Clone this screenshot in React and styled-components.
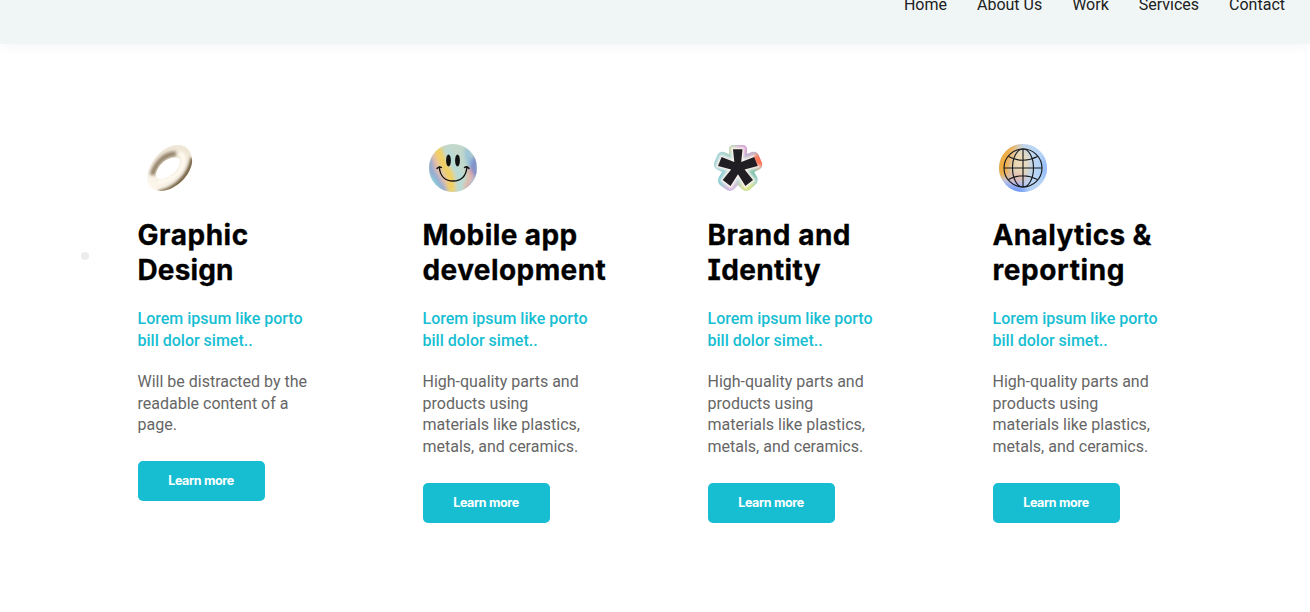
import React from 'react';
import styled, { createGlobalStyle } from 'styled-components';

const GlobalStyle = createGlobalStyle`
  * { box-sizing: border-box; }
  body { margin: 0; background: #fff; font-family: Roboto, sans-serif; overflow: hidden; }
`;

const Page = styled.div`
  height: 612px;
  overflow: hidden;
`;

const Header = styled.header`
  display: flex;
  align-items: flex-start;
  justify-content: flex-end;
  height: 44px;
  background: #f0f6f6;
  box-shadow: 0 4px 10px rgba(0, 0, 0, 0.03);
`;

const Nav = styled.nav`
  display: flex;
  gap: 30px;
  padding-right: 25px;
  margin-top: -7px;
`;

const NavLink = styled.a`
  font-size: 16px;
  line-height: 24px;
  color: #212121;
`;

const Services = styled.main`
  position: relative;
  display: grid;
  grid-template-columns: repeat(4, 285px);
  align-items: start;
  padding: 100px 0 0 137.5px;
`;

const Dot = styled.span`
  position: absolute;
  left: 81px;
  top: 208px;
  width: 8px;
  height: 8px;
  border-radius: 50%;
  background: #ececec;
`;

const Card = styled.article`
  width: 190px;
`;

const Icon = styled.svg`
  display: block;
  width: 48px;
  height: 48px;
  margin-left: 6.5px;
  overflow: visible;
`;

const Title = styled.h2`
  margin: 26px 0 0;
  font: 700 28px/35px Inter, sans-serif;
  font-feature-settings: 'cv08';
  -webkit-text-stroke: 0.3px #000;
  color: #000;
  white-space: nowrap;
`;

const TitleLine = styled.span`
  display: block;
  letter-spacing: ${(p) => p.$spacing || 0}px;
`;

const Lead = styled.p`
  margin: 20px 0 0;
  font-size: 16px;
  font-weight: 500;
  line-height: 22px;
  color: #17bed2;
  white-space: pre-line;
`;

const Copy = styled.p`
  margin: 19px 0 0;
  font-size: 16px;
  line-height: 21.6px;
  color: #666;
  white-space: pre-line;
`;

const Button = styled.button`
  display: block;
  width: 127px;
  height: 40px;
  margin-top: 25.4px;
  padding: 0;
  border: 0;
  border-radius: 5px;
  background: #17bed2;
  color: #fff;
  font: 700 12.5px/40px Inter, sans-serif;
  letter-spacing: -0.35px;
`;

const RingIcon = () => (
  <Icon viewBox="0 0 48 48">
    <defs>
      <linearGradient id="ring" x1="1" y1="0.1" x2="0.05" y2="0.9">
        <stop offset="0" stopColor="#efe6d6" />
        <stop offset="0.5" stopColor="#eee6d8" />
        <stop offset="1" stopColor="#fffaf0" />
      </linearGradient>
      <filter id="soft" filterUnits="userSpaceOnUse" x="-10" y="-10" width="68" height="68">
        <feGaussianBlur stdDeviation="1.7" />
      </filter>
      <clipPath id="ringClip">
        <path clipRule="evenodd" d="M34 1C43 1 49 8 48 19C45 35 29 47 16 47C6 47 1 39 4 28C9 12 22 1 34 1ZM31 13.5C23 13.5 15 20 12.5 28C11 33 13 35 18 35C28 33 35 26 36 18C37 15 35 13.5 31 13.5Z" />
      </clipPath>
    </defs>
    <g clipPath="url(#ringClip)">
      <path fill="url(#ring)" d="M0 0H48V48H0Z" />
      <g fill="none" filter="url(#soft)">
        <path d="M32 10C22 9 12 18 8 31" stroke="#938269" strokeWidth="5" />
        <path d="M35 9C41 11 41 19 35 28C30 34 23 37 14 38" stroke="#fffaf0" strokeWidth="5" />
        <path d="M49 14C46 31 32 46 15 49" stroke="#75613f" strokeWidth="5" />
      </g>
    </g>
  </Icon>
);

const SmileIcon = () => (
  <Icon viewBox="0 0 48 48">
    <defs>
      <clipPath id="face"><circle cx="24" cy="24" r="24" /></clipPath>
      <filter id="faceBlur" filterUnits="userSpaceOnUse" x="-10" y="-10" width="68" height="68"><feGaussianBlur stdDeviation="2" /></filter>
    </defs>
    <g clipPath="url(#face)">
      <path fill="#c2d8cb" d="M0 0H48V48H0Z" />
      <g fill="none" filter="url(#faceBlur)">
        <path d="M0 13L3 28L16 49" stroke="#8ea9d2" strokeWidth="7" />
        <path d="M4 8L8 24L22 47" stroke="#e7bdaa" strokeWidth="5" />
        <path d="M8 3L14 19L21 31L23 49" stroke="#f3d05c" strokeWidth="8" />
        <path d="M18 6L24 21L31 32L30 48" stroke="#b4dcd8" strokeWidth="6" />
        <path d="M38 4L40 18L48 30" stroke="#91bfdb" strokeWidth="5" />
        <path d="M48 12L44 24L50 34" stroke="#7d8bc9" strokeWidth="7" />
        <path d="M39 25L42 32L36 46" stroke="#efad9b" strokeWidth="4" />
        <path d="M48 34L40 47" stroke="#8bbce0" strokeWidth="5" />
        <path d="M1 33L10 47" stroke="#8ed5df" strokeWidth="5" />
      </g>
    </g>
    <ellipse cx="19.5" cy="16.5" rx="2.4" ry="6.1" fill="#111" />
    <ellipse cx="28.5" cy="16.5" rx="2.4" ry="6.1" fill="#111" />
    <path d="M8 24.5Q10 22 12.5 23.5M35.5 23.5Q38 21.5 40 24.5M10.3 23C11 33 17 37 24 37S37 33 38 23" fill="none" stroke="#111" strokeWidth="1.4" strokeLinecap="round" />
  </Icon>
);

const starPath = 'M19 5.3H28.5L27.2 18.1L40.2 13.1L43.8 21.9L30.6 25.4L39 36.1L31.4 42L24 30.3L16.5 42L8.7 36.1L17.2 25.4L4 21.9L7.6 13.1L20.3 18.1Z';

const StarIcon = () => (
  <Icon viewBox="0 0 48 48">
    <defs>
      <clipPath id="starShape">
        <path d="M15 5Q15 1 20 1H28Q33 1 33 6V10L38 8Q43 7 45 12L48 19Q49 24 44 26L40 28L43 33Q45 38 41 41L35 46Q31 48 28 45L24 41L20 45Q17 48 13 46L6 41Q3 38 5 33L8 28L4 26Q-1 24 0 19L3 12Q5 7 10 8L15 10Z" />
      </clipPath>
      <filter id="starBlur"><feGaussianBlur stdDeviation="3" /></filter>
      <filter id="edgeBlur"><feGaussianBlur stdDeviation="1" /></filter>
    </defs>
    <g clipPath="url(#starShape)">
      <path fill="#a5d3d6" d="M0 0H48V48H0Z" />
      <g filter="url(#starBlur)">
        <circle cx="31" cy="4" r="9" fill="#d79bd2" />
        <circle cx="17" cy="5" r="6" fill="#cbd8a9" />
        <circle cx="47" cy="17" r="9" fill="#ff6c4c" />
        <circle cx="40" cy="29" r="7" fill="#80c5ae" />
        <circle cx="33" cy="45" r="9" fill="#d6e37c" />
        <circle cx="17" cy="44" r="8" fill="#d5b2e0" />
        <circle cx="5" cy="36" r="7" fill="#86ced5" />
      </g>
      <path d={starPath} fill="none" stroke="#faf3ed" strokeWidth="4" filter="url(#edgeBlur)" />
      <path d="M41 12L45 21" fill="none" stroke="#ff5d3c" strokeWidth="3" filter="url(#edgeBlur)" />
    </g>
    <path d={starPath} fill="#201e22" />
  </Icon>
);

const GlobeIcon = () => (
  <Icon viewBox="0 0 48 48">
    <defs>
      <clipPath id="globe"><circle cx="24" cy="24" r="24" /></clipPath>
      <filter id="globeBlur" filterUnits="userSpaceOnUse" x="-15" y="-15" width="78" height="78"><feGaussianBlur stdDeviation="3.5" /></filter>
    </defs>
    <g clipPath="url(#globe)">
      <path fill="#b8d5f5" d="M0 0H48V48H0Z" />
      <g filter="url(#globeBlur)">
        <path fill="#efac43" d="M-12-12H24L13 13L10 34L-12 34Z" />
        <ellipse cx="22" cy="19" rx="9" ry="15" fill="#ecd9b6" />
        <ellipse cx="18" cy="34" rx="10" ry="4" fill="#e7b1a3" />
        <path fill="#7199f6" d="M-5 40L22 41L37 60H-5Z" />
        <ellipse cx="48" cy="25" rx="4" ry="15" fill="#89b4fa" />
      </g>
    </g>
    <g fill="none" stroke="#17191d" strokeWidth="1.15">
      <circle cx="24" cy="24" r="19" />
      <ellipse cx="24" cy="24" rx="10.5" ry="19" />
      <path d="M5 24H43M24 5V43M9.5 12.5Q24 20 38.5 12.5M9.5 35.5Q24 28 38.5 35.5" />
    </g>
  </Icon>
);

const material = 'High-quality parts and\nproducts using\nmaterials like plastics,\nmetals, and ceramics.';
const cards = [
  { icon: RingIcon, title: [['Graphic', 0.55], ['Design', 0.15]], copy: 'Will be distracted by the\nreadable content of a\npage.' },
  { icon: SmileIcon, title: [['Mobile app', 0.42], ['development', 0.42]], copy: material },
  { icon: StarIcon, title: [['Brand and', 0.52], ['Identity', 0.35]], copy: material },
  { icon: GlobeIcon, title: [['Analytics &', 0.36], ['reporting', 0.6]], copy: material },
];

export default function App() {
  return (
    <Page>
      <GlobalStyle />
      <Header>
        <Nav>
          {['Home', 'About Us', 'Work', 'Services', 'Contact'].map((label) => <NavLink key={label}>{label}</NavLink>)}
        </Nav>
      </Header>
      <Services>
        <Dot />
        {cards.map(({ icon: Picture, title, copy }) => (
          <Card key={title[0][0]}>
            <Picture />
            <Title>{title.map(([text, spacing]) => <TitleLine key={text} $spacing={spacing}>{text}</TitleLine>)}</Title>
            <Lead>{'Lorem ipsum like porto\nbill dolor simet..'}</Lead>
            <Copy>{copy}</Copy>
            <Button>Learn more</Button>
          </Card>
        ))}
      </Services>
    </Page>
  );
}
